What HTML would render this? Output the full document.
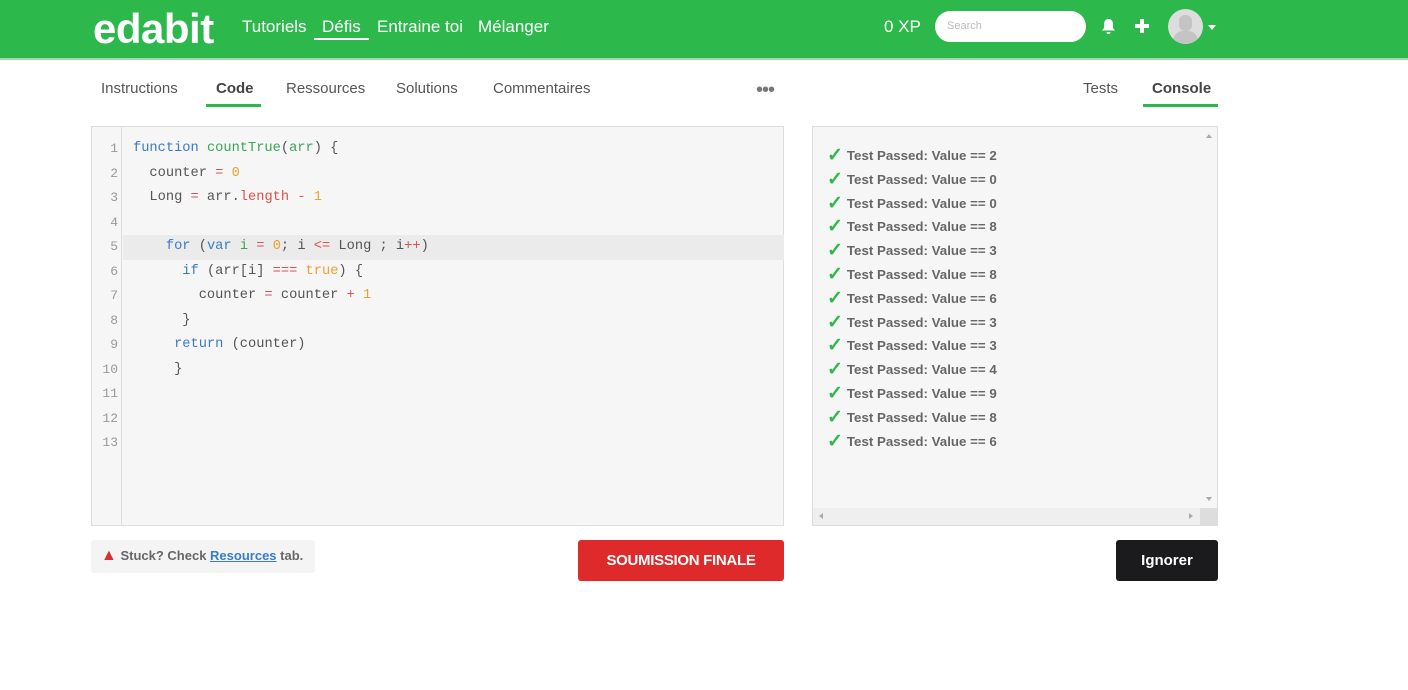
<!DOCTYPE html>
<html><head><meta charset="utf-8"><style>
*{margin:0;padding:0;box-sizing:border-box}
body{width:1408px;height:690px;background:#fff;font-family:"Liberation Sans",sans-serif;position:relative;overflow:hidden}
.hdr{position:absolute;left:0;top:0;width:1408px;height:60px;background:#2db84c;border-bottom:2px solid #9fd8ac}
.abs{position:absolute}
.logo{left:93px;top:5px;font-size:42px;font-weight:bold;color:#fff;letter-spacing:-0.5px}
.nav{top:17px;font-size:17px;color:#fff}
.tab{top:80px;font-size:15px;color:#555}
.code{left:91px;top:126px;width:693px;height:400px;background:#f6f6f6;border:1px solid #ddd}
.gut{position:absolute;left:0;top:0;width:30px;height:100%;border-right:1px solid #ddd}
.ln{position:absolute;left:0;width:26px;text-align:right;font-family:"Liberation Mono",monospace;font-size:13px;color:#999}
.cl{position:absolute;left:41px;font-family:"Liberation Mono",monospace;font-size:13.7px;color:#555;white-space:pre}
.k{color:#3a7cc4}.f{color:#3aa655}.n{color:#f0a030}.o{color:#d9534f}
.con{left:812px;top:126px;width:406px;height:400px;background:#f6f6f6;border:1px solid #ddd}
.tl{position:absolute;left:14px;font-size:13.3px;font-weight:bold;color:#666;white-space:nowrap}
.tl b{color:#2db84c;font-size:19px;margin-right:4px;position:relative;top:1px}
</style></head><body>
<div class="hdr"></div>
<div class="abs logo">edabit</div>
<div class="abs nav" style="left:242px">Tutoriels</div>
<div class="abs nav" style="left:322px">Défis</div>
<div class="abs" style="left:314px;top:38px;width:55px;height:2px;background:#fff"></div>
<div class="abs nav" style="left:377px">Entraine toi</div>
<div class="abs nav" style="left:478px">Mélanger</div>
<div class="abs nav" style="left:884px">0 XP</div>
<div class="abs" style="left:935px;top:11px;width:151px;height:31px;background:#fff;border-radius:16px;font-size:11px;color:#bbb;padding:9px 12px">Search</div>
<svg class="abs" style="left:1101px;top:18px" width="15" height="17" viewBox="0 0 15 17"><path d="M7.5 1c-3 0-4.5 2.5-4.5 5v4l-2 2.5h13L12 10V6c0-2.5-1.5-5-4.5-5z M5.5 14a2 2 0 0 0 4 0z" fill="#fff"/></svg>
<div class="abs" style="left:1135px;top:24px;width:14px;height:4px;background:#fff"></div>
<div class="abs" style="left:1140px;top:19px;width:4px;height:14px;background:#fff"></div>
<div class="abs" style="left:1168px;top:9px;width:35px;height:35px;border-radius:50%;background:#ddd;overflow:hidden"><div style="position:absolute;left:11px;top:6px;width:13px;height:16px;border-radius:6px;background:#c4c4c4"></div><div style="position:absolute;left:5px;top:22px;width:25px;height:16px;border-radius:10px 10px 0 0;background:#c4c4c4"></div></div>
<div class="abs" style="left:1208px;top:25px;border-left:4px solid transparent;border-right:4px solid transparent;border-top:5px solid #fff"></div>

<div class="abs tab" style="left:101px">Instructions</div>
<div class="abs tab" style="left:216px;color:#444;font-weight:bold">Code</div>
<div class="abs" style="left:206px;top:104px;width:55px;height:3px;background:#2db84c"></div>
<div class="abs tab" style="left:286px">Ressources</div>
<div class="abs tab" style="left:396px">Solutions</div>
<div class="abs tab" style="left:493px">Commentaires</div>
<div class="abs" style="left:756px;top:79px;font-size:20px;color:#777;letter-spacing:-1px">•••</div>
<div class="abs tab" style="left:1083px">Tests</div>
<div class="abs tab" style="left:1152px;color:#444;font-weight:bold">Console</div>
<div class="abs" style="left:1143px;top:104px;width:75px;height:3px;background:#2db84c"></div>

<div class="abs code">
<div class="gut"></div>
<div style="position:absolute;left:31px;top:108px;width:661px;height:25px;background:#ebebeb"></div>
<div class="ln" style="top:14px">1</div><div class="ln" style="top:39px">2</div><div class="ln" style="top:63px">3</div><div class="ln" style="top:88px">4</div><div class="ln" style="top:112px">5</div><div class="ln" style="top:137px">6</div><div class="ln" style="top:161px">7</div><div class="ln" style="top:186px">8</div><div class="ln" style="top:210px">9</div><div class="ln" style="top:235px">10</div><div class="ln" style="top:259px">11</div><div class="ln" style="top:284px">12</div><div class="ln" style="top:308px">13</div>
<div class="cl" style="top:14px"><span class="k">function</span> <span class="f">countTrue</span>(<span class="f">arr</span>) {</div>
<div class="cl" style="top:39px">  counter <span class="o">=</span> <span class="n">0</span></div>
<div class="cl" style="top:63px">  Long <span class="o">=</span> arr.<span class="o">length</span> <span class="o">-</span> <span class="n">1</span></div>
<div class="cl" style="top:112px">    <span class="k">for</span> (<span class="k">var</span> <span class="f">i</span> <span class="o">=</span> <span class="n">0</span>; i <span class="o">&lt;=</span> Long ; i<span class="o">++</span>)</div>
<div class="cl" style="top:137px">      <span class="k">if</span> (arr[i] <span class="o">===</span> <span class="n">true</span>) {</div>
<div class="cl" style="top:161px">        counter <span class="o">=</span> counter <span class="o">+</span> <span class="n">1</span></div>
<div class="cl" style="top:186px">      }</div>
<div class="cl" style="top:210px">     <span class="k">return</span> (counter)</div>
<div class="cl" style="top:235px">     }</div>
</div>

<div class="abs con">
<div style="position:absolute;right:0;bottom:0;width:17px;height:17px;background:#ddd"></div>
<div style="position:absolute;left:0;bottom:0;width:387px;height:17px;background:#efefef"></div>
<div style="position:absolute;right:5px;top:7px;border-left:3px solid transparent;border-right:3px solid transparent;border-bottom:4px solid #aaa"></div>
<div style="position:absolute;right:5px;top:370px;border-left:3px solid transparent;border-right:3px solid transparent;border-top:4px solid #aaa"></div>
<div style="position:absolute;left:6px;bottom:6px;border-top:3px solid transparent;border-bottom:3px solid transparent;border-right:4px solid #aaa"></div>
<div style="position:absolute;left:376px;bottom:6px;border-top:3px solid transparent;border-bottom:3px solid transparent;border-left:4px solid #aaa"></div>
<div class="tl" style="top:16px"><b>✓</b>Test Passed: Value == 2</div>
<div class="tl" style="top:40px"><b>✓</b>Test Passed: Value == 0</div>
<div class="tl" style="top:64px"><b>✓</b>Test Passed: Value == 0</div>
<div class="tl" style="top:87px"><b>✓</b>Test Passed: Value == 8</div>
<div class="tl" style="top:111px"><b>✓</b>Test Passed: Value == 3</div>
<div class="tl" style="top:135px"><b>✓</b>Test Passed: Value == 8</div>
<div class="tl" style="top:159px"><b>✓</b>Test Passed: Value == 6</div>
<div class="tl" style="top:183px"><b>✓</b>Test Passed: Value == 3</div>
<div class="tl" style="top:206px"><b>✓</b>Test Passed: Value == 3</div>
<div class="tl" style="top:230px"><b>✓</b>Test Passed: Value == 4</div>
<div class="tl" style="top:254px"><b>✓</b>Test Passed: Value == 9</div>
<div class="tl" style="top:278px"><b>✓</b>Test Passed: Value == 8</div>
<div class="tl" style="top:302px"><b>✓</b>Test Passed: Value == 6</div>
</div>

<div class="abs" style="left:91px;top:540px;width:224px;height:33px;background:#f4f4f4;border-radius:3px;font-size:13px;color:#666;font-weight:bold;padding:8px 0 0 10px;white-space:nowrap"><span style="color:#d9302c;font-size:16px;line-height:13px">▲</span> Stuck? Check <span style="color:#3a7cc4;text-decoration:underline">Resources</span> tab.</div>
<div class="abs" style="left:578px;top:540px;width:206px;height:41px;background:#de2a2a;border-radius:3px;color:#fff;font-size:15px;font-weight:bold;text-align:center;line-height:41px;letter-spacing:-0.3px">SOUMISSION FINALE</div>
<div class="abs" style="left:1116px;top:540px;width:102px;height:41px;background:#1b1b1d;border-radius:3px;color:#fff;font-size:15px;font-weight:bold;text-align:center;line-height:41px">Ignorer</div>
</body></html>
